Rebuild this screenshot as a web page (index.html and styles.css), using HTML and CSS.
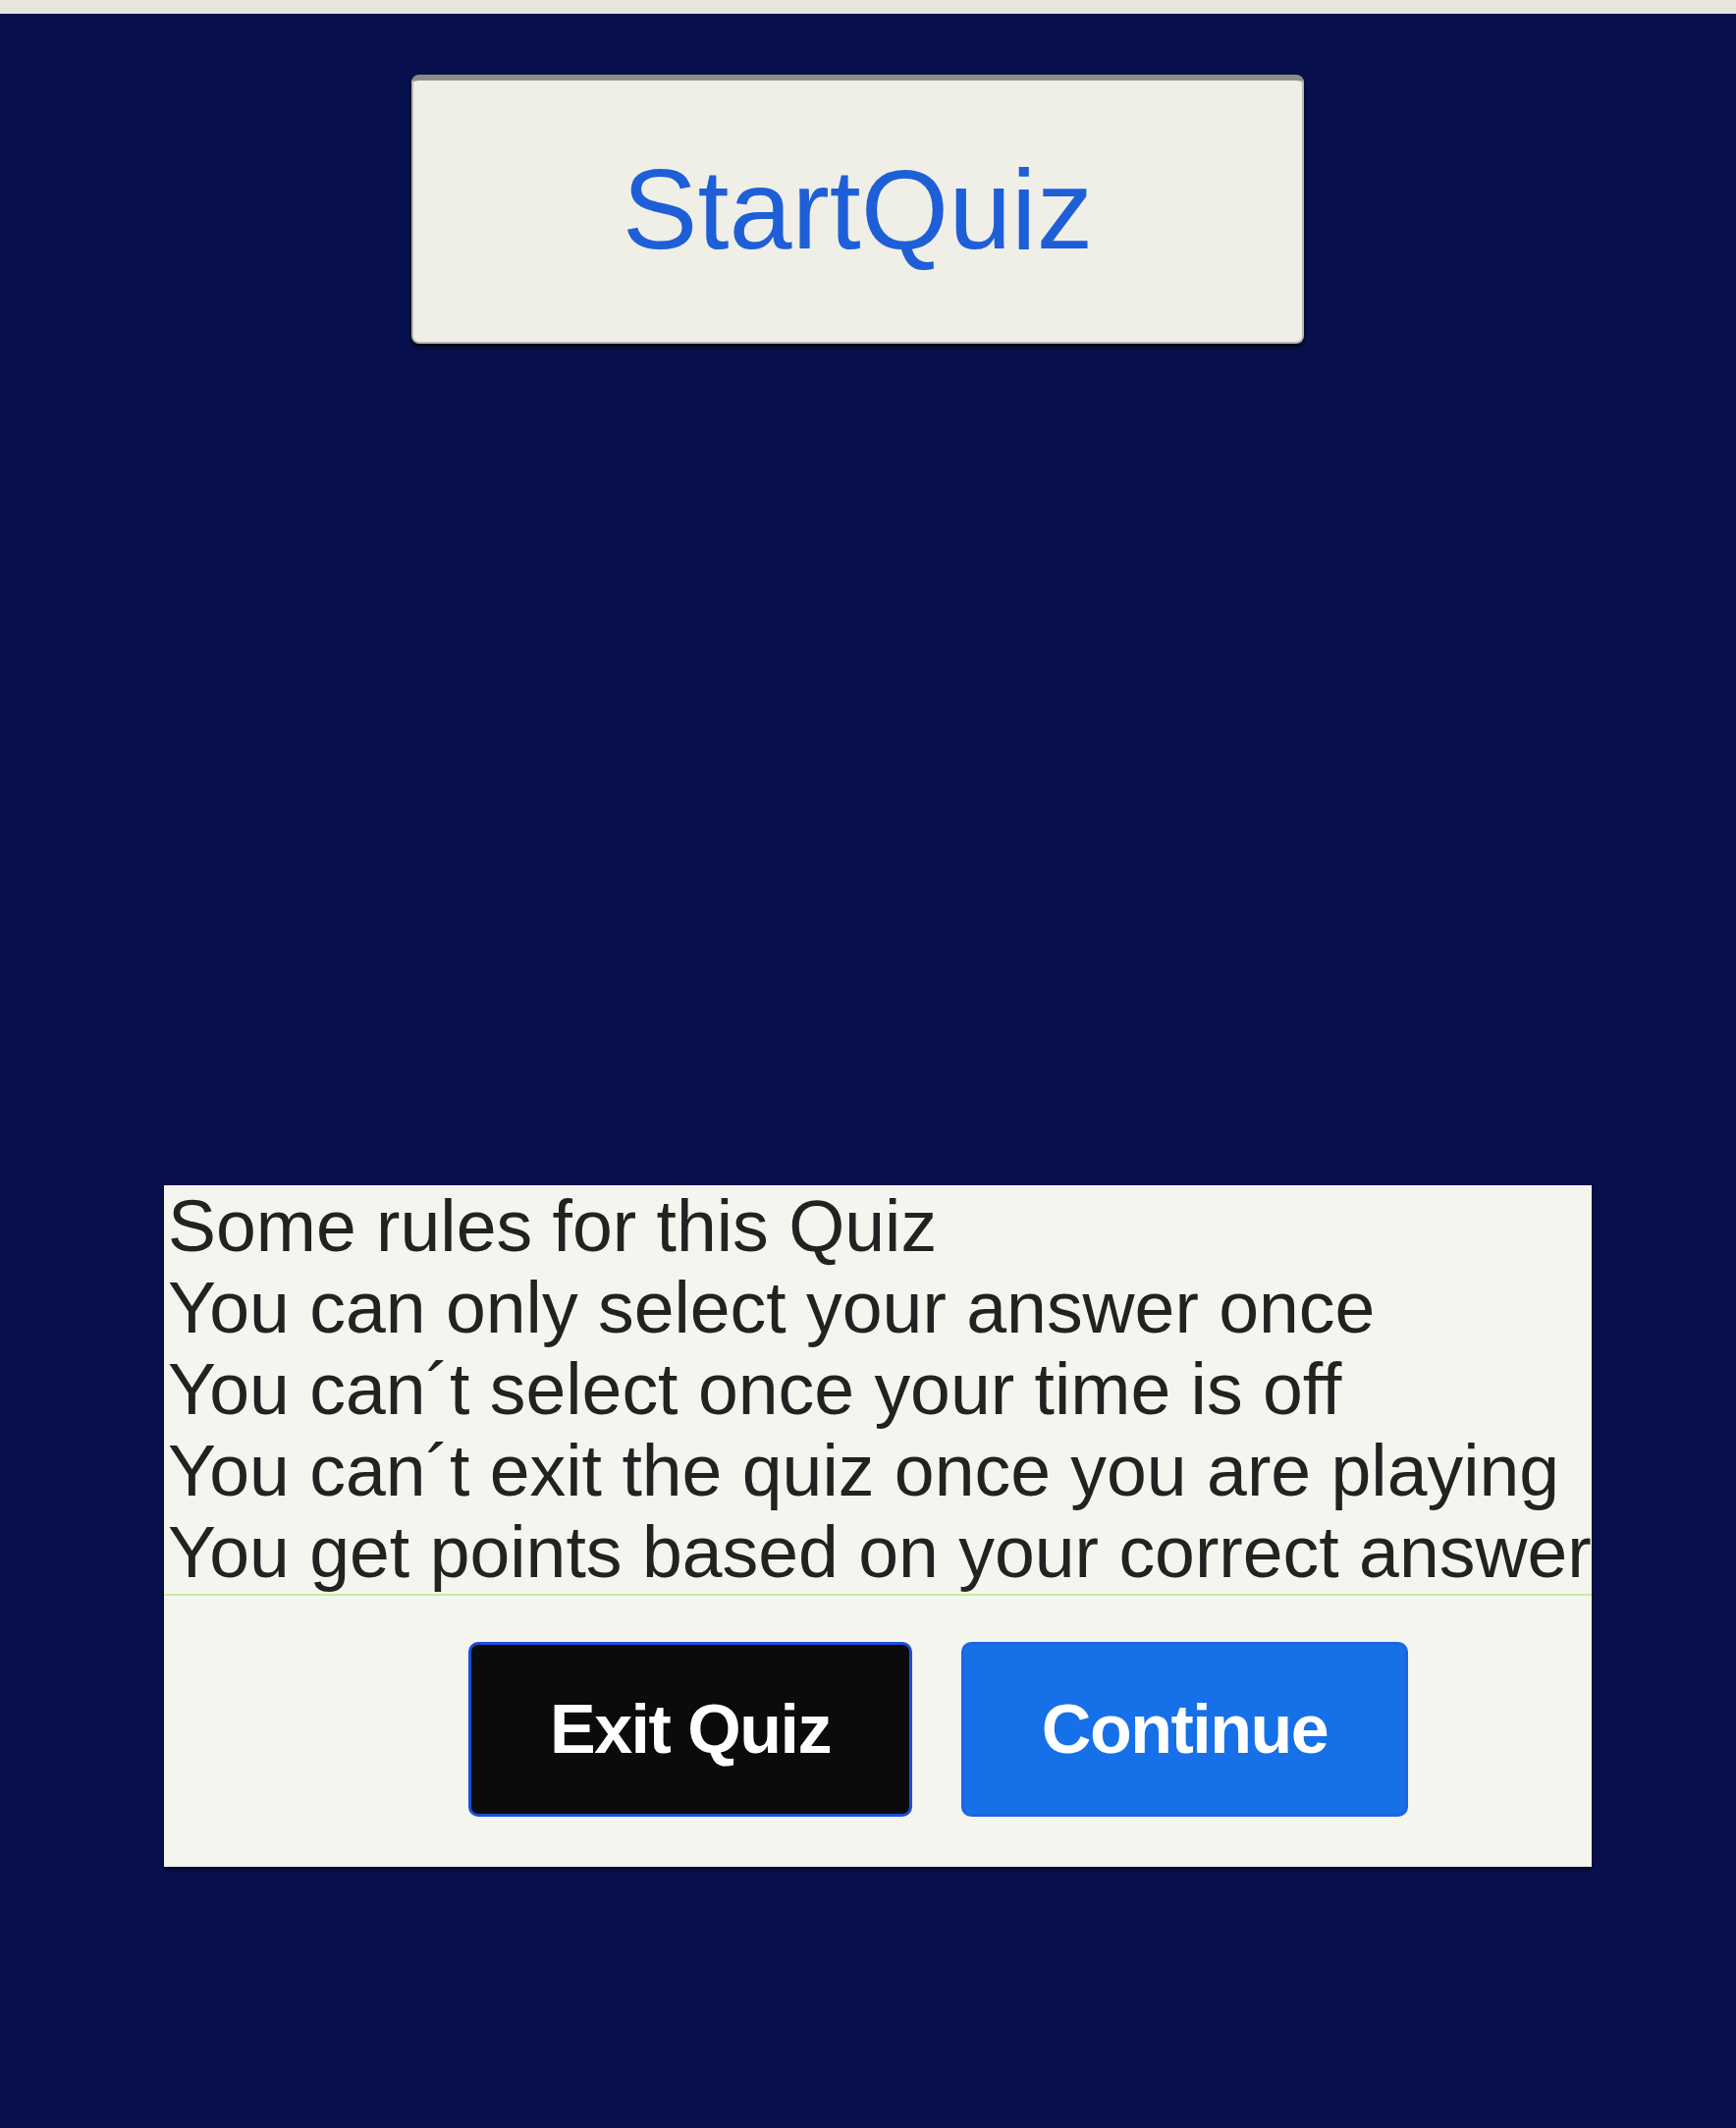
FILE: index.html
```html
<!DOCTYPE html>
<html>
<head>
<meta charset="utf-8">
<link rel="stylesheet" href="styles.css">
</head>
<body>
<div class="topstrip"></div>
<div class="start-row">
  <button class="start-btn">StartQuiz</button>
</div>
<div class="rules-box">
  <div class="rules">
    <div class="rule">Some rules for this Quiz</div>
    <div class="rule">You can only select your answer once</div>
    <div class="rule">You can´t select once your time is off</div>
    <div class="rule">You can´t exit the quiz once you are playing</div>
    <div class="rule">You get points based on your correct answer</div>
  </div>
  <div class="actions">
    <button class="btn btn-exit">Exit Quiz</button>
    <button class="btn btn-continue">Continue</button>
  </div>
</div>
</body>
</html>
```
FILE: styles.css
```css
html, body {
  margin: 0;
  padding: 0;
}
body {
  background: #08114d;
  min-height: 2167px;
  font-family: "Liberation Sans", Arial, sans-serif;
}
.topstrip {
  height: 14px;
  background: #e6e6de;
}
.start-row {
  display: flex;
  padding-left: 419px;
  margin-top: 62px;
}
.start-btn {
  width: 909px;
  height: 274px;
  box-sizing: border-box;
  background: #efefe7;
  border: 2px solid #b9b9b2;
  border-top: 6px solid #8e8e89;
  border-radius: 8px;
  box-shadow: 0 4px 5px rgba(0, 0, 0, 0.7);
  color: #1e5fd8;
  font-family: "Liberation Sans", Arial, sans-serif;
  font-size: 115px;
  padding: 0;
  padding-bottom: 4px;
}
.rules-box {
  margin-top: 857px;
  margin-left: 167px;
  width: 1454px;
  height: 694px;
  box-sizing: border-box;
  background: #f5f5f0;
  overflow: hidden;
  box-shadow: 0 3px 4px rgba(0, 0, 0, 0.6);
}
.rules {
  border-bottom: 2px solid #c6ec9e;
  padding-top: 1px;
  padding-left: 4px;
}
.rule {
  font-size: 73.4px;
  line-height: 83px;
  color: #222;
  white-space: nowrap;
}
.actions {
  display: flex;
  gap: 50px;
  padding-left: 310px;
  margin-top: 47px;
}
.btn {
  height: 178px;
  box-sizing: border-box;
  border-radius: 10px;
  font-family: "Liberation Sans", Arial, sans-serif;
  font-weight: bold;
  font-size: 70px;
  color: #fff;
  padding: 0;
  letter-spacing: -1.5px;
}
.btn-exit {
  width: 452px;
  background: #0b0b0e;
  border: 3px solid #1d4fd6;
}
.btn-continue {
  width: 455px;
  background: #1670e8;
  border: 3px solid #1a66e0;
}
```
